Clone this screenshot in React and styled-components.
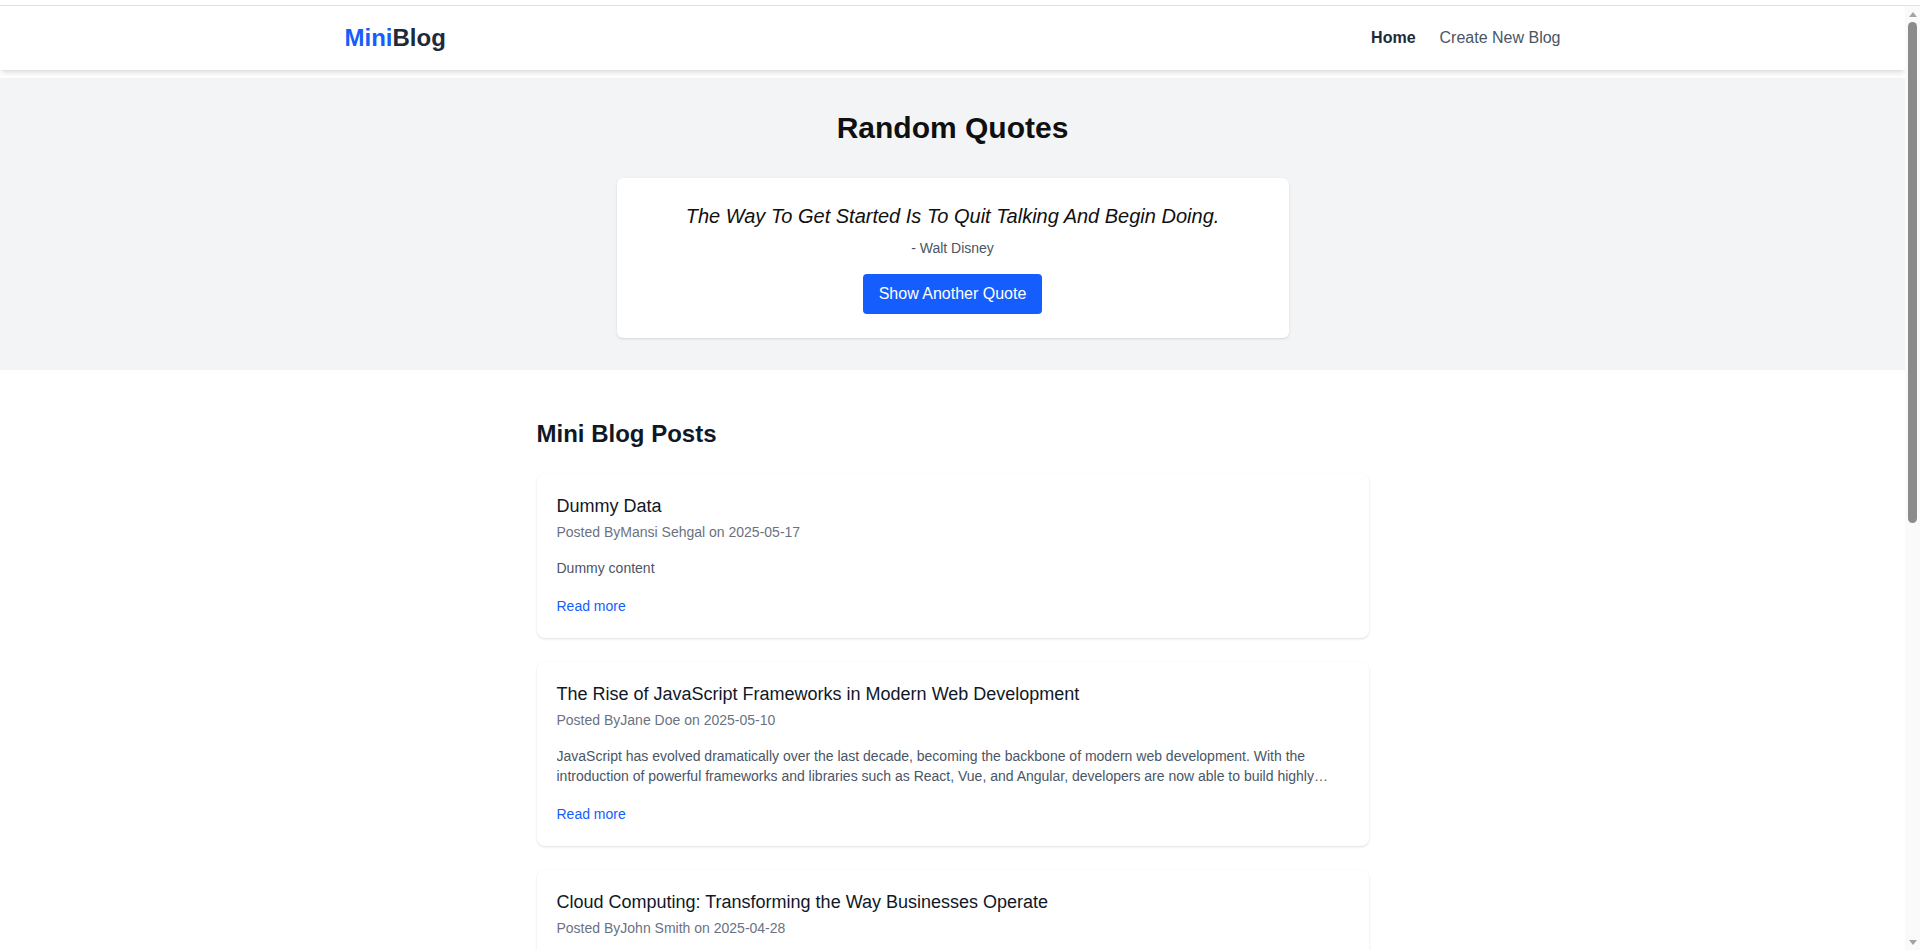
import React, { useState } from 'react';
import styled, { createGlobalStyle } from 'styled-components';

const GlobalStyle = createGlobalStyle`
	body {
		margin: 5px 0 0;
		padding-right: 15px;
		border-top: 1px solid #e2e2e2;
		background: #fff;
		font-family: "Liberation Sans", Arial, sans-serif;
		color: #101828;
	}
	* {
		box-sizing: border-box;
	}
`;

// stands in for the browser's scrollbar seen on the right edge
const Scrollbar = styled.div`
	position: fixed;
	top: 6px;
	right: 0;
	bottom: 0;
	width: 15px;
	background: #fafafa;
	display: flex;
	flex-direction: column;
	align-items: center;
	z-index: 10;
`;

const Arrow = styled.div`
	height: 16px;
	display: flex;
	align-items: center;
	justify-content: center;

	&::before {
		content: '';
		border-left: 4px solid transparent;
		border-right: 4px solid transparent;
		${(p) => (p.$down ? 'border-top: 5px solid #a3a3a3;' : 'border-bottom: 5px solid #a3a3a3;')}
	}
`;

const Thumb = styled.div`
	width: 9px;
	height: 501px;
	border-radius: 5px;
	background: #8b8b8b;
`;

const Spacer = styled.div`
	flex: 1;
`;

const Header = styled.header`
	position: relative;
	z-index: 1;
	background: #fff;
	box-shadow: 0 4px 6px -1px rgba(0, 0, 0, 0.1), 0 2px 4px -2px rgba(0, 0, 0, 0.1);
	margin-bottom: 8px;
`;

const HeaderInner = styled.div`
	max-width: 1280px;
	margin: 0 auto;
	padding: 16px 32px;
	display: flex;
	align-items: center;
	justify-content: space-between;
`;

const Logo = styled.a`
	font-size: 24px;
	line-height: 32px;
	font-weight: 700;
	color: #1e2939;
	text-decoration: none;

	span {
		color: #155dfc;
	}
`;

const Nav = styled.nav`
	display: flex;
	gap: 24px;
`;

const NavLink = styled.a`
	font-size: 16px;
	line-height: 24px;
	text-decoration: none;
	font-weight: ${(p) => (p.$active ? 700 : 400)};
	color: ${(p) => (p.$active ? '#1e2939' : '#4a5565')};
`;

const QuoteSection = styled.section`
	background: #f3f4f6;
	padding: 32px 16px;
	text-align: center;
`;

const SectionTitle = styled.h1`
	margin: 0 0 32px;
	font-size: 30px;
	line-height: 36px;
	font-weight: 700;
	color: #101010;
`;

const QuoteCard = styled.div`
	max-width: 672px;
	margin: 0 auto;
	background: #fff;
	border-radius: 6px;
	padding: 24px;
	box-shadow: 0 1px 3px 0 rgba(0, 0, 0, 0.1), 0 1px 2px -1px rgba(0, 0, 0, 0.1);
`;

const QuoteText = styled.p`
	margin: 0;
	font-size: 20px;
	line-height: 28px;
	font-style: italic;
	color: #101010;
`;

const QuoteAuthor = styled.p`
	margin: 8px 0 0;
	font-size: 14px;
	line-height: 20px;
	color: #4a5565;
`;

const QuoteButton = styled.button`
	margin-top: 16px;
	padding: 8px 16px;
	border: none;
	border-radius: 4px;
	background: #155dfc;
	color: #fff;
	font-family: inherit;
	font-size: 16px;
	line-height: 24px;
	cursor: pointer;
`;

const PostsSection = styled.section`
	max-width: 896px;
	margin: 0 auto;
	padding: 48px 32px;
`;

const PostsTitle = styled.h2`
	margin: 0 0 24px;
	font-size: 24px;
	line-height: 32px;
	font-weight: 700;
	color: #101828;
`;

const PostList = styled.div`
	display: flex;
	flex-direction: column;
	gap: 24px;
`;

const PostCard = styled.article`
	background: #fff;
	border-radius: 8px;
	padding: 20px;
	box-shadow: 0 1px 3px 0 rgba(0, 0, 0, 0.1), 0 1px 2px -1px rgba(0, 0, 0, 0.1);
`;

const PostTitle = styled.h3`
	margin: 0 0 4px;
	font-size: 18px;
	line-height: 24px;
	font-weight: 400;
	color: #101828;
`;

const PostMeta = styled.p`
	margin: 0;
	font-size: 14px;
	line-height: 20px;
	color: #6a7282;
`;

const PostExcerpt = styled.p`
	margin: 16px 0 0;
	font-size: 14px;
	line-height: 20px;
	color: #4a5565;
	display: -webkit-box;
	-webkit-line-clamp: 2;
	-webkit-box-orient: vertical;
	overflow: hidden;
`;

const PostFooter = styled.div`
	margin-top: 16px;
	font-size: 16px;
	line-height: 24px;
`;

const ReadMore = styled.a`
	font-size: 14px;
	color: #155dfc;
	text-decoration: none;
`;

const quotes = [
	{ text: 'The Way To Get Started Is To Quit Talking And Begin Doing.', author: 'Walt Disney' },
	{ text: 'Life Is What Happens When You Are Busy Making Other Plans.', author: 'John Lennon' },
	{ text: 'The Future Belongs To Those Who Believe In The Beauty Of Their Dreams.', author: 'Eleanor Roosevelt' }
];

const posts = [
	{
		title: 'Dummy Data',
		author: 'Mansi Sehgal',
		date: '2025-05-17',
		content: 'Dummy content'
	},
	{
		title: 'The Rise of JavaScript Frameworks in Modern Web Development',
		author: 'Jane Doe',
		date: '2025-05-10',
		content:
			'JavaScript has evolved dramatically over the last decade, becoming the backbone of modern web development. With the introduction of powerful frameworks and libraries such as React, Vue, and Angular, developers are now able to build highly interactive and performant user interfaces with less effort than ever before.'
	},
	{
		title: 'Cloud Computing: Transforming the Way Businesses Operate',
		author: 'John Smith',
		date: '2025-04-28',
		content:
			'Cloud computing has changed how companies store data, run applications and scale their services. Instead of maintaining expensive hardware, businesses can now rent computing power on demand and pay only for what they use.'
	}
];

const App = () => {
	const [index, setIndex] = useState(0);
	const quote = quotes[index];

	return (
		<>
			<GlobalStyle />
			<Scrollbar>
				<Arrow />
				<Thumb />
				<Spacer />
				<Arrow $down />
			</Scrollbar>
			<Header>
				<HeaderInner>
					<Logo href="#">
						<span>Mini</span>Blog
					</Logo>
					<Nav>
						<NavLink href="#" $active>Home</NavLink>
						<NavLink href="#">Create New Blog</NavLink>
					</Nav>
				</HeaderInner>
			</Header>

			<QuoteSection>
				<SectionTitle>Random Quotes</SectionTitle>
				<QuoteCard>
					<QuoteText>{quote.text}</QuoteText>
					<QuoteAuthor>- {quote.author}</QuoteAuthor>
					<QuoteButton onClick={() => setIndex((index + 1) % quotes.length)}>
						Show Another Quote
					</QuoteButton>
				</QuoteCard>
			</QuoteSection>

			<PostsSection>
				<PostsTitle>Mini Blog Posts</PostsTitle>
				<PostList>
					{posts.map((post, i) => (
						<PostCard key={i}>
							<PostTitle>{post.title}</PostTitle>
							<PostMeta>
								Posted By{post.author} on {post.date}
							</PostMeta>
							<PostExcerpt>{post.content}</PostExcerpt>
							<PostFooter>
								<ReadMore href="#">Read more</ReadMore>
							</PostFooter>
						</PostCard>
					))}
				</PostList>
			</PostsSection>
		</>
	);
};

export default App;
